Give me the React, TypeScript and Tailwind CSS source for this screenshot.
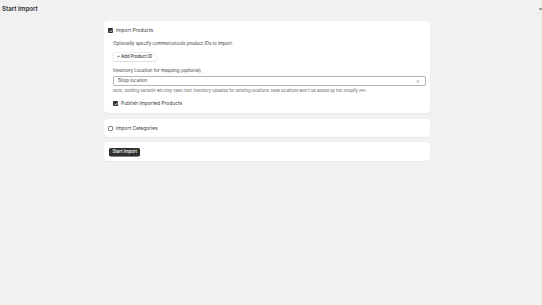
export default function App() {
  const font = { fontFamily: "Inter, 'Noto Sans', sans-serif" };

  const Check = ({ on }: { on: boolean }) =>
    on ? (
      <span className="flex h-[5px] w-[5px] shrink-0 items-center justify-center rounded-[1px] bg-[#303030]">
        <svg viewBox="0 0 10 10" className="h-[4px] w-[4px]" fill="none" stroke="white" strokeWidth="2" strokeLinecap="round" strokeLinejoin="round">
          <path d="M2 5.2 4.2 7.4 8 2.8" />
        </svg>
      </span>
    ) : (
      <span className="h-[5px] w-[5px] shrink-0 rounded-[1px] border-[0.5px] border-[#8a8a8a] bg-white" />
    );

  return (
    <div className="relative min-h-[305px] w-full bg-[#f1f1f1] text-[#3a3a3a]" style={font}>
      <div className="flex h-[18px] items-center justify-between pl-[2px]">
        <h1 className="text-[6.2px] font-semibold leading-none text-[#303030]">Start Import</h1>
        <div className="mr-[-2px] h-[1.5px] w-[5px] rounded bg-[#9a9a9a]" />
      </div>

      <div className="ml-[104px] mt-[3px] flex w-[326px] flex-col">
        {/* products card */}
        <div className="rounded-[4px] bg-white px-[4px] pb-[7px] pt-[7px] shadow-[0_0.5px_0_0_#e0e0e0]">
          <div className="flex h-[5px] items-center gap-[3px]">
            <Check on />
            <span className="text-[4.9px] leading-[5px]">Import Products</span>
          </div>
          <div className="pl-[5px]">
            <p className="mt-[8px] text-[4.5px] leading-[6px]">
              Optionally specify commercetools product IDs to import.
            </p>
            <button className="mt-[6px] block h-[8px] rounded-[2px] bg-white px-[4px] text-[4.3px] font-medium leading-[8px] shadow-[0_0_0_0.5px_#dcdcdc,0_0.6px_0_0_#bdbdbd]">
              + Add Product ID
            </button>
            <p className="mt-[7px] text-[4.5px] leading-[6px]">Inventory Location for mapping (optional)</p>
            <div className="mt-[2px] flex h-[10px] items-center justify-between rounded-[2px] border-[0.5px] border-[#b5b5b5] pl-[4px] pr-[5px]">
              <span className="text-[4.5px] leading-[6px]">Shop location</span>
              <svg viewBox="0 0 10 10" className="h-[5px] w-[4px]" fill="none" stroke="#4a4a4a" strokeWidth="1.2" strokeLinecap="round" strokeLinejoin="round">
                <path d="M3 4 5 2 7 4M3 6 5 8 7 6" />
              </svg>
            </div>
            <p className="mt-[1.5px] text-[4.05px] leading-[5px] text-[#616161]">
              Note, existing variants will only have their inventory updated for existing locations. New locations won't be added by the Shopify API.
            </p>
            <div className="mt-[8.5px] flex h-[5px] items-center gap-[3px]">
              <Check on />
              <span className="text-[4.9px] leading-[5px]">Publish Imported Products</span>
            </div>
          </div>
        </div>

        {/* categories card */}
        <div className="mt-[6px] flex h-[18px] items-center gap-[3px] rounded-[4px] bg-white px-[4px] shadow-[0_0.5px_0_0_#e0e0e0]">
          <Check on={false} />
          <span className="text-[4.9px] leading-[5px]">Import Categories</span>
        </div>

        {/* action card */}
        <div className="mt-[5px] flex h-[19px] items-center rounded-[4px] bg-white px-[5px] shadow-[0_0.5px_0_0_#e0e0e0]">
          <button className="block h-[8px] rounded-[2px] bg-[#303030] px-[3.5px] text-[4.3px] font-medium leading-[8px] text-white shadow-[0_0.6px_0_0_#000]">
            Start Import
          </button>
        </div>
      </div>
    </div>
  );
}
